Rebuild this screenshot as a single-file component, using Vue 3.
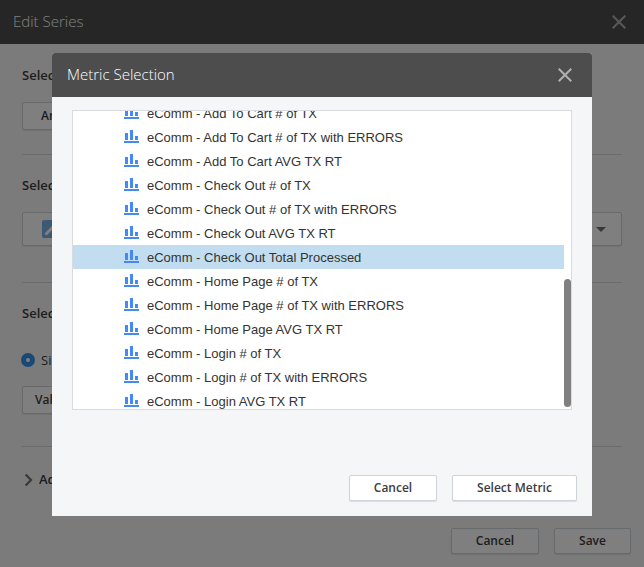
<script setup>
const metrics = [
  'Add To Cart # of TX',
  'Add To Cart # of TX with ERRORS',
  'Add To Cart AVG TX RT',
  'Check Out # of TX',
  'Check Out # of TX with ERRORS',
  'Check Out AVG TX RT',
  'Check Out Total Processed',
  'Home Page # of TX',
  'Home Page # of TX with ERRORS',
  'Home Page AVG TX RT',
  'Login # of TX',
  'Login # of TX with ERRORS',
  'Login AVG TX RT',
]
const selected = 'Check Out Total Processed'
</script>

<template>
  <div class="page">
    <header class="bar">
      <span class="title">Edit Series</span>
      <svg class="close" width="14" height="14" viewBox="0 0 14 14"><path d="M.7.7 13.3 13.3M13.3.7.7 13.3" /></svg>
    </header>
    <main class="form">
      <section class="block first">
        <h3>Select</h3>
        <div class="field analysis">Analysis</div>
      </section>
      <section class="block second">
        <h3>Select</h3>
        <div class="field combo">
          <svg width="18" height="18" viewBox="0 0 18 18">
            <rect width="18" height="18" rx="2" fill="#7ab2e4" />
            <path d="M3.5 14.5 13.5 4.5" stroke="#fff" stroke-width="3" fill="none" />
          </svg>
          <i class="caret"></i>
        </div>
      </section>
      <section class="block third">
        <h3>Select</h3>
        <div class="option"><i class="radio"></i><span>Single</span></div>
        <div class="field value">Value</div>
      </section>
      <section class="advanced">
        <svg width="10" height="14" viewBox="0 0 10 14"><path d="M1.7 1.4 7 7 1.7 12.6" fill="none" stroke="#707070" stroke-width="2.2" /></svg>
        <span>Advanced</span>
      </section>
    </main>
    <footer class="actions">
      <button class="cancel">Cancel</button>
      <button class="save">Save</button>
    </footer>

    <div class="overlay">
      <div class="modal">
        <header class="bar modal-bar">
          <span class="title">Metric Selection</span>
          <svg class="close" width="14" height="14" viewBox="0 0 14 14"><path d="M.7.7 13.3 13.3M13.3.7.7 13.3" /></svg>
        </header>
        <div class="tree">
          <ul>
            <li v-for="m in metrics" :key="m" :class="{ active: m === selected }">
              <svg width="15" height="13" viewBox="0 0 15 13" shape-rendering="crispEdges">
                <path fill="#448af5" d="M1 3h3v7H1zM6 0h3v10H6zM11 6h3v4h-3zM0 11h15v2H0z" />
              </svg>
              <span>eComm - {{ m }}</span>
            </li>
          </ul>
          <div class="track"><div class="thumb"></div></div>
        </div>
        <footer class="actions">
          <button class="cancel">Cancel</button>
          <button class="select">Select Metric</button>
        </footer>
      </div>
    </div>
  </div>
</template>

<style>
body { margin: 0; overflow: hidden; }
</style>

<style scoped>
* { box-sizing: border-box; }
.page {
  position: relative;
  display: flex;
  flex-direction: column;
  width: 644px;
  height: 567px;
  overflow: hidden;
  background: #f7f7f7;
  color: #3c3c3c;
  font: 13px/18px "Open Sans", sans-serif;
}
.bar {
  display: flex;
  flex: none;
  align-items: center;
  justify-content: space-between;
  height: 44px;
  padding: 0 18px 0 13px;
  background: #4d4d4d;
  color: #fff;
}
.title { padding-bottom: 2px; font-size: 15px; font-weight: 300; line-height: 20px; }
.close { fill: none; stroke: #b0b0b0; stroke-width: 2; }
.form { flex: 1; padding: 0 22px; }
.block { border-bottom: 1px solid #d5d6da; }
.first { height: 111px; padding-top: 22px; }
.second { height: 128px; padding-top: 21px; }
.third { height: 164px; padding-top: 21px; }
h3 { margin: 0; font-size: 13px; line-height: 18px; font-weight: 600; }
.field {
  display: flex;
  align-items: center;
  height: 28px;
  border: 1px solid #cfd2d6;
  border-radius: 2px;
  background: #fff;
  font-size: 12px;
  font-weight: 600;
  box-shadow: 0 1px 1px rgba(0, 0, 0, .08);
}
.analysis { width: 140px; margin-top: 18px; padding-left: 18px; }
.combo { height: 34px; margin-top: 18px; padding: 0 15px 0 19px; justify-content: space-between; }
.caret { border: 5px solid transparent; border-top-color: #707070; border-bottom: 0; }
.option { display: flex; align-items: center; gap: 6px; height: 18px; margin: 29px 0 17px -1px; }
.radio { width: 14px; height: 14px; border: 5px solid #3492ec; border-radius: 50%; background: #fff; }
.option span { padding-bottom: 1px; }
.value { width: 140px; padding-left: 12px; }
.advanced { display: flex; align-items: center; gap: 5px; padding: 23px 0 0 2px; font-weight: 600; }
.advanced svg { margin-top: 2px; }
.actions { display: flex; justify-content: flex-end; gap: 15px; padding: 0 13px 13px; }
button {
  height: 26px;
  padding: 0 0 1px;
  border: 1px solid #cfd4da;
  border-radius: 2px;
  background: #fff;
  color: #3c3c3c;
  font: 600 12px/18px "Open Sans", sans-serif;
  box-shadow: 0 1px 1px rgba(0, 0, 0, .1);
}
.cancel { width: 88px; }
.save { width: 77px; }
.select { width: 125px; }
.overlay {
  position: absolute;
  inset: 0;
  padding: 53px 52px 51px;
  background: rgba(0, 0, 0, .5);
}
.modal {
  display: flex;
  flex-direction: column;
  height: 463px;
  background: #f4f6f8;
  border-radius: 3px 3px 0 0;
  overflow: hidden;
}
.modal-bar { padding: 0 20px 0 15px; }
.tree {
  display: flex;
  height: 300px;
  margin: 13px 20px 0;
  border: 1px solid #d9dbde;
  background: #fff;
  overflow: hidden;
}
ul { flex: 1; margin: -10px 0 0; padding: 0; list-style: none; }
li {
  display: flex;
  align-items: center;
  gap: 8px;
  height: 24px;
  padding-left: 51px;
  color: #333;
  font: 13px/22px "Liberation Sans", Arial, sans-serif;
  white-space: nowrap;
}
li svg { flex: none; margin-bottom: 1px; }
li span { padding-top: 2px; }
.active { background: #c1ddef; }
.track { display: flex; width: 7px; padding: 168px 0 2px; }
.thumb { width: 7px; border-radius: 3.5px; background: #808080; }
.modal .actions { margin-top: auto; padding: 0 15px 15px; }
</style>
